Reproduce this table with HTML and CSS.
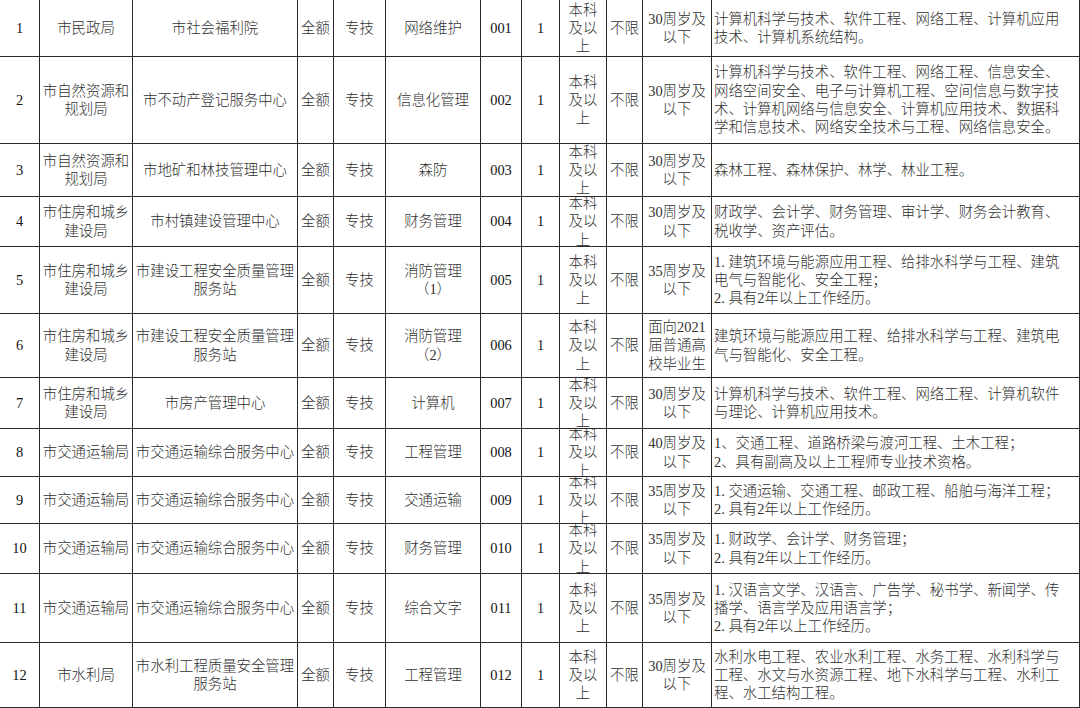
FILE: index.html
```html
<!DOCTYPE html>
<html lang="zh-CN">
<head>
<meta charset="utf-8">
<title>岗位表</title>
<link rel="stylesheet" href="styles.css">
</head>
<body>
<div class="sheet">
  <div class="num">1</div><div>市民政局</div><div>市社会福利院</div><div>全额</div><div>专技</div><div>网络维护</div><div class="num">001</div><div class="num">1</div><div>本科及以上</div><div>不限</div><div class="age">30周岁及以下</div><div class="req">计算机科学与技术、软件工程、网络工程、计算机应用技术、计算机系统结构。</div>

  <div class="num">2</div><div>市自然资源和规划局</div><div>市不动产登记服务中心</div><div>全额</div><div>专技</div><div>信息化管理</div><div class="num">002</div><div class="num">1</div><div>本科及以上</div><div>不限</div><div class="age">30周岁及以下</div><div class="req">计算机科学与技术、软件工程、网络工程、信息安全、网络空间安全、电子与计算机工程、空间信息与数字技术、计算机网络与信息安全、计算机应用技术、数据科学和信息技术、网络安全技术与工程、网络信息安全。</div>

  <div class="num">3</div><div>市自然资源和规划局</div><div>市地矿和林技管理中心</div><div>全额</div><div>专技</div><div>森防</div><div class="num">003</div><div class="num">1</div><div>本科及以上</div><div>不限</div><div class="age">30周岁及以下</div><div class="req">森林工程、森林保护、林学、林业工程。</div>

  <div class="num">4</div><div>市住房和城乡建设局</div><div>市村镇建设管理中心</div><div>全额</div><div>专技</div><div>财务管理</div><div class="num">004</div><div class="num">1</div><div>本科及以上</div><div>不限</div><div class="age">30周岁及以下</div><div class="req">财政学、会计学、财务管理、审计学、财务会计教育、税收学、资产评估。</div>

  <div class="num">5</div><div>市住房和城乡建设局</div><div>市建设工程安全质量管理服务站</div><div>全额</div><div>专技</div><div>消防管理（1）</div><div class="num">005</div><div class="num">1</div><div>本科及以上</div><div>不限</div><div class="age">35周岁及以下</div><div class="req">1. 建筑环境与能源应用工程、给排水科学与工程、建筑电气与智能化、安全工程；<br>2. 具有2年以上工作经历。</div>

  <div class="num">6</div><div>市住房和城乡建设局</div><div>市建设工程安全质量管理服务站</div><div>全额</div><div>专技</div><div>消防管理（2）</div><div class="num">006</div><div class="num">1</div><div>本科及以上</div><div>不限</div><div class="age">面向2021届普通高校毕业生</div><div class="req">建筑环境与能源应用工程、给排水科学与工程、建筑电气与智能化、安全工程。</div>

  <div class="num">7</div><div>市住房和城乡建设局</div><div>市房产管理中心</div><div>全额</div><div>专技</div><div>计算机</div><div class="num">007</div><div class="num">1</div><div>本科及以上</div><div>不限</div><div class="age">30周岁及以下</div><div class="req">计算机科学与技术、软件工程、网络工程、计算机软件与理论、计算机应用技术。</div>

  <div class="num">8</div><div>市交通运输局</div><div>市交通运输综合服务中心</div><div>全额</div><div>专技</div><div>工程管理</div><div class="num">008</div><div class="num">1</div><div>本科及以上</div><div>不限</div><div class="age">40周岁及以下</div><div class="req">1、交通工程、道路桥梁与渡河工程、土木工程；<br>2、具有副高及以上工程师专业技术资格。</div>

  <div class="num">9</div><div>市交通运输局</div><div>市交通运输综合服务中心</div><div>全额</div><div>专技</div><div>交通运输</div><div class="num">009</div><div class="num">1</div><div>本科及以上</div><div>不限</div><div class="age">35周岁及以下</div><div class="req">1. 交通运输、交通工程、邮政工程、船舶与海洋工程；<br>2. 具有2年以上工作经历。</div>

  <div class="num">10</div><div>市交通运输局</div><div>市交通运输综合服务中心</div><div>全额</div><div>专技</div><div>财务管理</div><div class="num">010</div><div class="num">1</div><div>本科及以上</div><div>不限</div><div class="age">35周岁及以下</div><div class="req">1. 财政学、会计学、财务管理；<br>2. 具有2年以上工作经历。</div>

  <div class="num">11</div><div>市交通运输局</div><div>市交通运输综合服务中心</div><div>全额</div><div>专技</div><div>综合文字</div><div class="num">011</div><div class="num">1</div><div>本科及以上</div><div>不限</div><div class="age">35周岁及以下</div><div class="req">1. 汉语言文学、汉语言、广告学、秘书学、新闻学、传播学、语言学及应用语言学；<br>2. 具有2年以上工作经历。</div>

  <div class="num">12</div><div>市水利局</div><div>市水利工程质量安全管理服务站</div><div>全额</div><div>专技</div><div>工程管理</div><div class="num">012</div><div class="num">1</div><div>本科及以上</div><div>不限</div><div class="age">30周岁及以下</div><div class="req">水利水电工程、农业水利工程、水务工程、水利科学与工程、水文与水资源工程、地下水科学与工程、水利工程、水工结构工程。</div>
</div>
</body>
</html>
```

FILE: styles.css
```css
html, body {
  margin: 0;
  padding: 0;
  background: #ffffff;
}

.sheet {
  display: grid;
  grid-template-columns: 39px 92px 164px 35px 51px 94px 40px 37px 46px 35px 68px 367px;
  grid-template-rows: 56px 86px 52px 49px 66px 63px 50px 47px 46px 49px 68px 64px;
  gap: 1px;
  padding: 0 1px 1px 0;
  width: max-content;
  background: #2a2a2a;
  font-family: "Liberation Serif", "Noto Sans CJK SC", serif;
  font-size: 14.4px;
  line-height: 18.3px;
  font-weight: 300;
  color: #303030;
  text-spacing-trim: space-all;
}

.sheet > div {
  box-sizing: border-box;
  min-width: 0;
  min-height: 0;
  overflow: hidden;
  padding: 0 2px;
  background: #ffffff;
  display: flex;
  align-items: center;
  justify-content: center;
  text-align: center;
}

.sheet > .num {
  color: #111111;
}

.sheet > .age {
  padding: 0 3px;
}

.sheet > .req {
  justify-content: flex-start;
  text-align: left;
  padding: 0 8px 0 2px;
}
```
